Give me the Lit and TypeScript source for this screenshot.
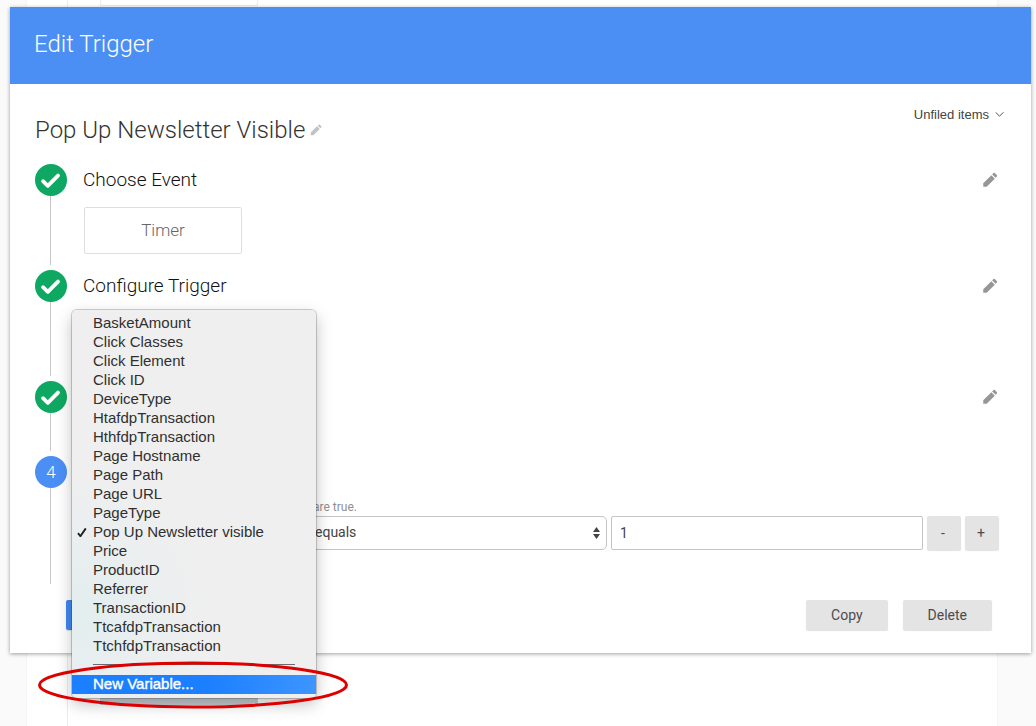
import { LitElement, html, css, svg, nothing } from "lit";
import { customElement, property, state } from "lit/decorators.js";

const pencil = svg`<path d="M3 16.4V21h4.6L18.4 10.2l-4.6-4.6L3 16.4zM21.2 7.4a1.3 1.3 0 0 0 0-1.8l-2.8-2.8a1.3 1.3 0 0 0-1.8 0l-1.7 1.7 4.6 4.6 1.7-1.7z"/>`;

@customElement("variable-menu")
export class VariableMenu extends LitElement {
  @property({ attribute: false }) items: string[] = [];
  @property() selected = "";

  static styles = css`
    :host {
      display: block;
      box-sizing: border-box;
      padding: 4px 0;
      border-radius: 5px;
      background: radial-gradient(ellipse 120px 130px at 10px 300px, #e3eeef, #efefef);
      box-shadow: 0 0 0 1px rgba(0, 0, 0, 0.18), 0 6px 16px rgba(0, 0, 0, 0.26);
      font: 15px/17px "Liberation Sans", Arial, sans-serif;
    }
    .list {
      margin: 0;
      padding: 0;
      list-style: none;
    }
    .item {
      display: grid;
      grid-template-columns: 21px 1fr;
      align-items: center;
      width: 100%;
      height: 19px;
      margin: 0;
      padding: 0 0 2px;
      border: 0;
      background: none;
      color: #2f2f2f;
      font: inherit;
      text-align: left;
      white-space: nowrap;
      cursor: default;
    }
    .label {
      grid-column: 2;
    }
    .tick {
      justify-self: end;
      margin-right: 6px;
      width: 10px;
      height: 10px;
      grid-column: 1;
      grid-row: 1;
    }
    .divider {
      height: 1px;
      margin: 8px 21px 10px;
      background: #6c6c6c;
    }
    .active {
      background: linear-gradient(to right, #1c7fff 55%, #3d95ff);
      color: #fff;
      -webkit-text-stroke: 0.4px #fff;
    }
  `;

  render() {
    return html`
      <ul class="list">
        ${this.items.map(
          (name) => html`<li>
            <button class="item" type="button">
              ${name === this.selected
                ? html`<svg class="tick" viewBox="0 0 10 10" aria-hidden="true">
                    <path d="M1 6.2l2.4 3L8.8 1.4" fill="none" stroke="#222" stroke-width="1.9" />
                  </svg>`
                : nothing}
              <span class="label">${name}</span>
            </button>
          </li>`
        )}
        <li class="divider" role="separator"></li>
        <li>
          <button class="item active" type="button"><span class="label">New Variable...</span></button>
        </li>
      </ul>
    `;
  }
}

@customElement("trigger-step")
export class TriggerStep extends LitElement {
  @property({ type: Number }) number = 1;
  @property({ type: Boolean }) done = false;
  @property() heading = "";

  static styles = css`
    :host {
      display: grid;
      grid-template-columns: 32px 1fr;
      column-gap: 16px;
    }
    .rail {
      display: flex;
      flex-direction: column;
      align-items: center;
    }
    .badge {
      display: flex;
      align-items: center;
      justify-content: center;
      width: 32px;
      height: 32px;
      flex: none;
      border-radius: 50%;
      background: #4b8ff5;
      color: #fff;
      font-size: 17px;
      font-weight: 300;
    }
    .done {
      background: #0fa862;
    }
    .check {
      width: 32px;
      height: 32px;
    }
    .line {
      flex: 1;
      width: 1px;
      margin: 0 1px 5px 0;
      background: #c6c6c6;
    }
    .head {
      display: flex;
      align-items: center;
      justify-content: space-between;
      height: 32px;
    }
    .heading {
      margin: 0;
      color: #111;
      font-size: 19px;
      line-height: 24px;
      font-weight: 300;
    }
    .edit {
      display: flex;
      margin: 0;
      padding: 0;
      border: 0;
      background: none;
    }
    .pencil {
      width: 18px;
      height: 18px;
      fill: #969696;
    }
  `;

  render() {
    return html`
      <div class="rail">
        <div class="badge ${this.done ? "done" : ""}">
          ${this.done
            ? html`<svg class="check" viewBox="0 0 32 32" role="img" aria-label="Done">
                <path d="M8 17.2l4.8 4.6L23 11.6" fill="none" stroke="#fff" stroke-width="3.8" stroke-linecap="round" stroke-linejoin="round" />
              </svg>`
            : this.number}
        </div>
        <div class="line"></div>
      </div>
      <div>
        <div class="head">
          <h3 class="heading">${this.heading}</h3>
          ${this.done
            ? html`<button class="edit" type="button" aria-label="Edit step">
                <svg class="pencil" viewBox="0 0 24 24" aria-hidden="true">${pencil}</svg>
              </button>`
            : nothing}
        </div>
        <slot></slot>
      </div>
    `;
  }
}

@customElement("app-root")
export class AppRoot extends LitElement {
  @state() private variable = "Pop Up Newsletter visible";

  private variables = [
    "BasketAmount",
    "Click Classes",
    "Click Element",
    "Click ID",
    "DeviceType",
    "HtafdpTransaction",
    "HthfdpTransaction",
    "Page Hostname",
    "Page Path",
    "Page URL",
    "PageType",
    "Pop Up Newsletter visible",
    "Price",
    "ProductID",
    "Referrer",
    "TransactionID",
    "TtcafdpTransaction",
    "TtchfdpTransaction",
  ];

  static styles = css`
    :host {
      display: grid;
      min-height: 100vh;
      overflow: hidden;
      background: #fafafa;
      color: #444;
      font-family: Roboto, sans-serif;
    }
    .backdrop,
    .front {
      grid-area: 1 / 1;
    }
    .backdrop {
      display: grid;
      grid-template-columns: 40px 1fr;
      margin: 0 39px 0 27px;
      background: #fff;
      box-shadow: 0 0 1px #ddd;
    }
    .pane {
      display: flex;
      flex-direction: column;
      justify-content: space-between;
      grid-column: 2;
      padding: 0 32px 21px;
      border-left: 1px solid #ececec;
    }
    .ghost {
      width: 156px;
      height: 5px;
      border: solid #ececec;
      border-width: 0 1px 1px;
    }
    .bar {
      width: 158px;
      height: 20px;
      background: #c6cdd0;
    }
    .front {
      padding: 7px 5px 0 10px;
    }
    .card {
      background: #fff;
      box-shadow: 0 1px 4px rgba(0, 0, 0, 0.38);
    }
    .banner {
      display: flex;
      align-items: center;
      height: 77px;
      padding: 0 24px 3px;
      box-sizing: border-box;
      background: #4b8ff5;
    }
    .title {
      margin: 0;
      color: #fff;
      font-size: 24px;
      line-height: 28px;
      font-weight: 300;
    }
    .body {
      padding: 20px 32px 23px 25px;
    }
    .top {
      display: flex;
      justify-content: space-between;
      align-items: flex-start;
      height: 40px;
      margin-bottom: 20px;
    }
    .name {
      display: flex;
      align-items: center;
      gap: 4px;
      margin: 12px 0 0;
      color: #333;
      font-size: 24px;
      line-height: 28px;
      font-weight: 300;
    }
    .icon-button {
      display: flex;
      padding: 0;
      border: 0;
      background: none;
    }
    .small-pencil {
      width: 14px;
      height: 14px;
      fill: #c2c2c2;
    }
    .folder {
      display: flex;
      align-items: center;
      gap: 6px;
      margin-right: -5px;
      padding: 0;
      border: 0;
      background: none;
      color: #444;
      font: 13px/22px "Liberation Sans", Arial, sans-serif;
    }
    .chevron {
      width: 9px;
      height: 6px;
    }
    .event {
      min-height: 106px;
    }
    .config {
      min-height: 111px;
    }
    .filter {
      min-height: 75px;
    }
    .fire {
      min-height: 133px;
    }
    .choice {
      display: block;
      width: 158px;
      height: 47px;
      margin: 11px 0 0 1px;
      padding: 0 0 2px;
      border: 1px solid #dedede;
      border-radius: 2px;
      background: #fff;
      color: #666;
      font: 300 17px/20px Roboto, sans-serif;
    }
    .rule {
      display: grid;
      grid-template-columns: 207px 1fr 1fr 34px 34px;
      column-gap: 4px;
      margin: 10px 0 0 1px;
    }
    .hint {
      grid-column: 2 / -1;
      height: 18px;
      padding-left: 18px;
      color: #909090;
      font-size: 12px;
      line-height: 18px;
    }
    .field,
    .picker {
      position: relative;
      display: grid;
    }
    .select,
    .input {
      box-sizing: border-box;
      width: 100%;
      height: 34px;
      margin: 0;
      border: 1px solid #c4c4c4;
      background: #fff;
      color: #444;
      font: 14px/20px Roboto, sans-serif;
      appearance: none;
      outline: 0;
    }
    .select {
      padding: 0 24px 2px 19px;
      border-radius: 5px;
    }
    .input {
      padding: 0 8px;
      border-radius: 2px;
    }
    .arrows {
      position: absolute;
      right: 7px;
      top: 10px;
      width: 7px;
      height: 14px;
      fill: #444;
      pointer-events: none;
    }
    .menu {
      position: absolute;
      z-index: 1;
      left: -12px;
      bottom: -148px;
      width: 244px;
    }
    .mark {
      position: absolute;
      z-index: 2;
      left: -48px;
      bottom: -160px;
      width: 314px;
      height: 50px;
      pointer-events: none;
    }
    .button {
      height: 30px;
      padding: 0 25px 1px;
      border: 0;
      border-radius: 2px;
      background: #e4e4e4;
      box-shadow: 0 1px 1px rgba(0, 0, 0, 0.12);
      color: #4c4c4c;
      font: 14px/20px Roboto, sans-serif;
    }
    .square {
      height: 34px;
      padding: 0 2px 1px 0;
    }
    .actions {
      display: flex;
      gap: 15px;
      margin: 11px 7px 0 31px;
    }
    .save {
      width: 110px;
      margin-right: auto;
      background: #4288f0;
    }
  `;

  render() {
    return html`
      <div class="backdrop" aria-hidden="true">
        <div class="pane">
          <div class="ghost"></div>
          <div class="bar"></div>
        </div>
      </div>
      <main class="front">
        <section class="card">
          <header class="banner"><h1 class="title">Edit Trigger</h1></header>
          <div class="body">
            <div class="top">
              <h2 class="name">
                Pop Up Newsletter Visible
                <button class="icon-button" type="button" aria-label="Rename">
                  <svg class="small-pencil" viewBox="0 0 24 24" aria-hidden="true">${pencil}</svg>
                </button>
              </h2>
              <button class="folder" type="button">
                Unfiled items
                <svg class="chevron" viewBox="0 0 9 6" aria-hidden="true">
                  <path d="M.6 .3L4.5 4.2 8.4 .3" fill="none" stroke="#555" />
                </svg>
              </button>
            </div>

            <trigger-step class="event" done heading="Choose Event">
              <button class="choice" type="button">Timer</button>
            </trigger-step>
            <trigger-step class="config" done heading="Configure Trigger"></trigger-step>
            <trigger-step class="filter" done></trigger-step>
            <trigger-step class="fire" number="4">
              <div class="rule">
                <div class="hint">are true.</div>
                <div class="picker">
                  <select class="select" aria-label="Variable"></select>
                  <variable-menu class="menu" .items=${this.variables} .selected=${this.variable}></variable-menu>
                  <svg class="mark" viewBox="0 0 314 50" aria-hidden="true">
                    <ellipse cx="157" cy="25" rx="153.5" ry="22" fill="none" stroke="#dc0000" stroke-width="3" />
                  </svg>
                </div>
                <div class="field">
                  <select class="select" aria-label="Operator">
                    <option>equals</option>
                  </select>
                  <svg class="arrows" viewBox="0 0 7 14" aria-hidden="true">
                    <path d="M3.5 1L7 6H0zM3.5 13L0 8h7z" />
                  </svg>
                </div>
                <input class="input" type="text" aria-label="Value" .value=${"1"} />
                <button class="button square" type="button">-</button>
                <button class="button square" type="button">+</button>
              </div>
            </trigger-step>

            <div class="actions">
              <button class="button save" type="button" aria-label="Save"></button>
              <button class="button" type="button">Copy</button>
              <button class="button" type="button">Delete</button>
            </div>
          </div>
        </section>
      </main>
    `;
  }
}
